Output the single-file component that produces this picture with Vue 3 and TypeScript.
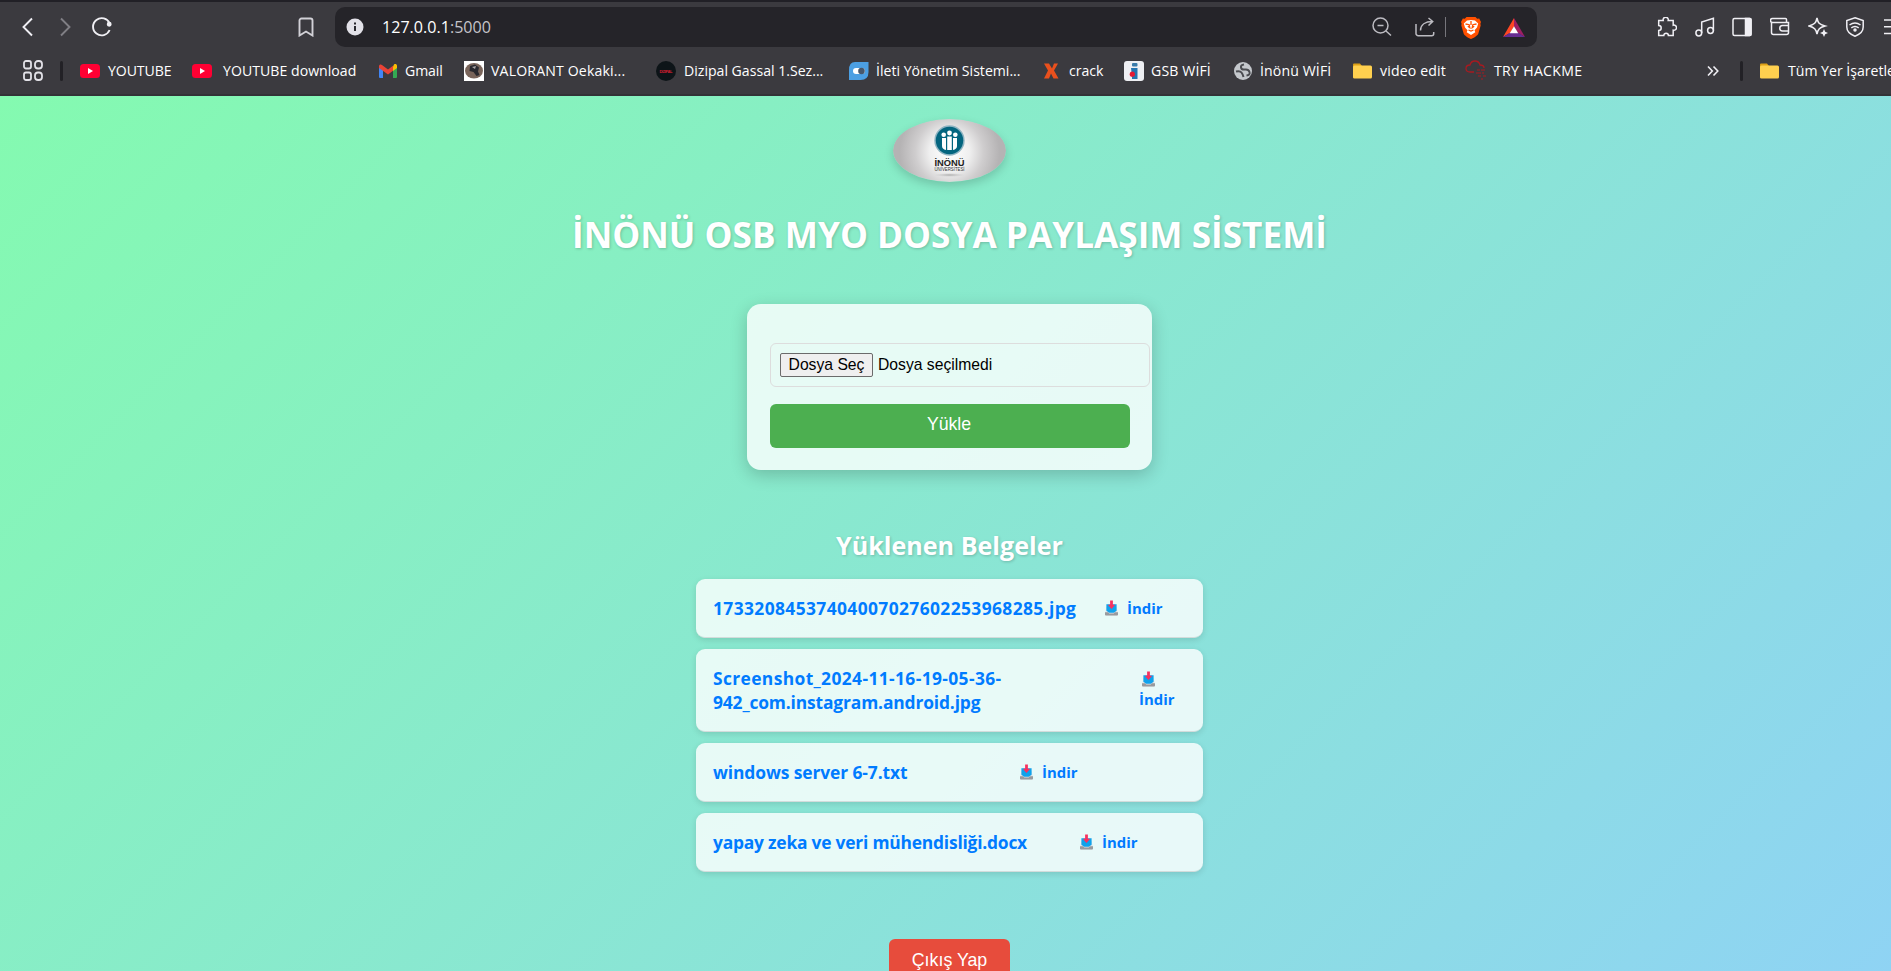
<script setup lang="ts">
interface Bookmark {
  icon: string
  label: string
  slot: number
  tracking: number
}

interface Line {
  text: string
  tracking: number
}

interface Doc {
  lines: Line[]
  nameWidth: number
  stacked?: boolean
}

const bookmarks: Bookmark[] = [
  { icon: 'youtube', label: 'YOUTUBE', slot: 28, tracking: -0.09 },
  { icon: 'youtube', label: 'YOUTUBE download', slot: 31, tracking: 0.03 },
  { icon: 'gmail', label: 'Gmail', slot: 26, tracking: -0.1 },
  { icon: 'valorant', label: 'VALORANT Oekaki...', slot: 27, tracking: 0.16 },
  { icon: 'dizipal', label: 'Dizipal Gassal 1.Sez...', slot: 28, tracking: 0 },
  { icon: 'ileti', label: 'İleti Yönetim Sistemi...', slot: 27, tracking: 0 },
  { icon: 'crack', label: 'crack', slot: 25, tracking: 0 },
  { icon: 'gsb', label: 'GSB WİFİ', slot: 27, tracking: 0.13 },
  { icon: 'globe', label: 'İnönü WİFİ', slot: 26, tracking: 0.12 },
  { icon: 'folder', label: 'video edit', slot: 27, tracking: 0.16 },
  { icon: 'cloud', label: 'TRY HACKME', slot: 29, tracking: 0.3 },
]

const documents: Doc[] = [
  { lines: [{ text: '17332084537404007027602253968285.jpg', tracking: 0.39 }], nameWidth: 392 },
  {
    lines: [
      { text: 'Screenshot_2024-11-16-19-05-36-', tracking: 0.38 },
      { text: '942_com.instagram.android.jpg', tracking: -0.14 },
    ],
    nameWidth: 426,
    stacked: true,
  },
  { lines: [{ text: 'windows server 6-7.txt', tracking: -0.09 }], nameWidth: 307 },
  { lines: [{ text: 'yapay zeka ve veri mühendisliği.docx', tracking: -0.21 }], nameWidth: 367 },
]
</script>

<template>
  <div class="window">
    <header class="chrome">
      <div class="toolbar">
        <svg class="nav" viewBox="0 0 20 20"><path d="M14 1.500 5.500 10l8.500 8.500" /></svg>
        <svg class="nav dim" viewBox="0 0 20 20"><path d="M6 1.500 14.500 10 6 18.500" /></svg>
        <svg class="nav reload" viewBox="0 0 20 20">
          <path d="M17.600 13A8.600 8.600 0 1 1 17.600 6.500" />
          <circle cx="17.200" cy="7.200" r="1.500" class="solid" />
        </svg>
        <svg class="nav mark" viewBox="0 0 20 20"><path d="M3.500 3.500a2 2 0 0 1 2-2h9a2 2 0 0 1 2 2v15L10 14.500l-6.500 4z" /></svg>
        <div class="address">
          <svg class="info" viewBox="0 0 18 18">
            <circle cx="9" cy="9" r="8.500" fill="#e2e1e8" />
            <path d="M9 8v5M9 4.500v2" stroke="#29282e" stroke-width="2" />
          </svg>
          <span class="url">127.0.0.1<span class="port">:5000</span></span>
          <svg class="tool zoom-out" viewBox="0 0 20 20"><circle cx="8.500" cy="8.500" r="7.500" /><path d="m14 14 5 4.500M5.500 8.500h6" /></svg>
          <svg class="tool share" viewBox="0 0 20 20"><path d="M1 7v9.500A2.200 2.200 0 0 0 3.200 18.700h13.500a2 2 0 0 0 2-2V15M5.500 13.500c0-6 5-9 12-9M13.500 1l4.200 3.500-4.200 4" /></svg>
          <i class="bar"></i>
          <svg class="brave" viewBox="0 0 20 23">
            <path d="M5.500 1h9l1.700 1.800 2-.2L20 6l-.6 1.800.3 1.600-2.500 8.500c-.3 1.200-5.700 4.800-7.200 5.100-1.500-.3-6.900-3.900-7.200-5.100L.3 9.400l.3-1.600L0 6l1.800-3.400 2 .2z" fill="#ff5000" />
            <path d="m6 4.500 4-.6 4 .6 3.200 3-1.200 4-2.500 2.700.8 2L10 19l-4.300-2.800.8-2L4 11.500l-1.200-4z" fill="#fff" />
            <path d="m4.500 8 3.700.7.600 3-2-1.500M15.500 8l-3.700.7-.6 3 2-1.500M10 5v4M7.500 14l2.500 1 2.500-1" fill="none" stroke="#ff5000" stroke-width="1.300" />
          </svg>
          <svg class="bat" viewBox="0 0 22 19">
            <path d="M11 0 0 19l7-4 4-6.500z" fill="#ff4724" />
            <path d="m11 0 11 19-7-4-4-6.500z" fill="#9e1f63" />
            <path d="M0 19h22l-6.500-4h-9z" fill="#662d91" />
            <path d="m11 8.300 4.300 7H6.700z" fill="#fff" />
          </svg>
        </div>
        <div class="actions">
          <svg viewBox="0 0 20 20"><path d="M2 3.500h4.500a2.600 2.600 0 1 1 5 0h5v4.700a2.600 2.600 0 1 1 0 5v5.300h-4.800a2.300 2.300 0 0 0-4.600 0H2v-5a2.500 2.500 0 1 0 0-5z" transform="translate(-.3)" /></svg>
          <svg viewBox="0 0 20 20"><circle cx="3.800" cy="16" r="2.900" /><circle cx="15.500" cy="13.500" r="2.900" /><path d="M6.700 16V5l11.700-3.800v12.300" /></svg>
          <svg viewBox="0 0 20 20"><rect x="1" y="1.500" width="18" height="17" rx="1.500" /><path d="M13.500 1.500H18q1 0 1 1v15q0 1-1 1h-4.500z" class="solid" /></svg>
          <svg viewBox="0 0 20 20"><path d="M1.500 4.500v11a2 2 0 0 0 2 2h13a2 2 0 0 0 2-2V5.500H2.500a1.500 1.500 0 0 1 0-4h13q1 0 1 1v3M18.500 8.500h-6a2 2 0 0 0 0 5.500h6z" /></svg>
          <svg viewBox="0 0 20 20"><path d="M9 1c1 5 2 6.500 8 8-5.500 1.500-7 3-8 8-1-5-2.500-6.500-8-8 5.500-1.500 7-3 8-8z" /><path d="m16 12 1.200 2.800L20 16l-2.800 1.200L16 20l-1.200-2.800L12 16l2.800-1.200z" class="solid thin" /></svg>
          <svg viewBox="0 0 20 20"><path d="m10 .8 8.200 2.700V10c0 4.500-3.700 7.500-8.200 9.200C5.500 17.500 1.800 14.500 1.800 10V3.500z" /><path d="M4.500 8q5.500-4 11 0M6.300 10.800q3.700-2.800 7.400 0" /><circle cx="10" cy="13" r="1" class="solid" /></svg>
          <svg viewBox="0 0 20 20"><path d="M1 3h18M1 9.800h18M1 16.500h18" /></svg>
        </div>
      </div>

      <nav class="bookmarks">
        <svg class="apps" viewBox="0 0 20 21">
          <rect x="1" y="1" width="7" height="7.500" rx="2" /><rect x="12" y="1" width="7" height="7.500" rx="3" />
          <rect x="1" y="12.500" width="7" height="7.500" rx="2" /><rect x="12" y="12.500" width="7" height="7.500" rx="3" />
        </svg>
        <i class="divider"></i>
        <a v-for="b in bookmarks" :key="b.label" class="bookmark">
          <span class="slot" :style="{ width: b.slot + 'px' }">
            <svg v-if="b.icon === 'youtube'" width="20" height="20" viewBox="0 0 20 20">
              <rect y="3" width="20" height="14" rx="3.500" fill="#ff0033" /><path d="m8 7 5 3-5 3z" fill="#fff" />
            </svg>
            <svg v-else-if="b.icon === 'gmail'" width="18" height="20" viewBox="0 0 18 20">
              <path d="M0 5v11q0 1 1 1h3V8z" fill="#4285f4" /><path d="M18 5v11q0 1-1 1h-3V8z" fill="#34a853" />
              <path d="M14 5.500V10l4-3V5c0-2-2-2.400-3-1.500z" fill="#fbbc04" /><path d="M0 5v2l9 6.500 5-3.700V4.800L9 8.500 3 4C2 3 0 3.500 0 5z" fill="#ea4335" />
            </svg>
            <svg v-else-if="b.icon === 'valorant'" width="20" height="20" viewBox="0 0 20 20">
              <path d="M0 0h20v20H0z" fill="#fff" /><ellipse cx="10" cy="9.700" rx="9" ry="7.700" fill="#79645a" />
              <path d="m6 5 5-1.500 4 3-1 4 1.500 3.500-3 1-3-4-4-1z" fill="#29282e" /><path d="m8 6 4-1-1 3zM8 11l3 2" fill="#aaa4a5" />
            </svg>
            <svg v-else-if="b.icon === 'dizipal'" width="20" height="20" viewBox="0 0 20 20">
              <circle cx="10" cy="10" r="10" fill="#0d1418" /><text x="10" y="12" text-anchor="middle" class="tiny" textLength="13">DIZIPAL</text>
            </svg>
            <svg v-else-if="b.icon === 'ileti'" width="20" height="20" viewBox="0 0 20 20">
              <path d="M6 1h13.500v10q0 8-8 8H0V9q0-8 6-8z" fill="#4c9fe2" /><rect x="4" y="7" width="12" height="6" rx="3" fill="#fff" /><circle cx="12.500" cy="10" r="3.300" fill="#48586c" />
            </svg>
            <svg v-else-if="b.icon === 'crack'" width="15" height="20" viewBox="0 0 15 20">
              <path d="M0 2.500h5l3 5 2-5h4l-4 7 4.500 8H9.500L7 12.500 5 17.500H0l4-8z" fill="#e9501d" />
            </svg>
            <svg v-else-if="b.icon === 'gsb'" width="20" height="20" viewBox="0 0 20 20">
              <rect width="20" height="20" rx="3" fill="#eeeff3" /><rect x="8" y="2" width="5.500" height="3.500" rx="1" fill="#397aa9" />
              <path d="M7 7h6.500v11H8v-3z" fill="#2474b0" /><circle cx="8.300" cy="13.200" r="2.600" fill="#e61932" />
            </svg>
            <svg v-else-if="b.icon === 'globe'" width="18" height="20" viewBox="0 0 18 20">
              <circle cx="9" cy="10" r="9" fill="#c4c7cc" />
              <path d="M2 10.500q4-1 5.500 1t2 4.500M10 3.500Q6.500 4 7 6.500t4 2 4.500 2.500-3 3.500" fill="none" stroke="#4b4c51" stroke-width="2" />
            </svg>
            <svg v-else-if="b.icon === 'folder'" width="19" height="20" viewBox="0 0 19 20">
              <path d="M0 3.500q0-1 1-1h6L9 5v12H1q-1 0-1-1z" fill="#dda017" /><rect y="4.500" width="19" height="13" rx="1.500" fill="#ffd04f" />
            </svg>
            <svg v-else width="21" height="21" viewBox="0 0 21 21" fill="none" stroke="#a81a20" stroke-width="1.300">
              <path d="M9 12H5Q1 12 1 8.500T5 5q1-4 5-4t5 4q4 0 4 3" /><path d="M12 10h3m1 0h4m-9 3h5m1 0h2m-6 3h3m2 0h3m-5 3h2" stroke-width="1.100" />
            </svg>
          </span>
          <span class="label" :style="{ letterSpacing: b.tracking + 'px' }">{{ b.label }}</span>
        </a>
        <svg class="more" viewBox="0 0 12 12"><path d="m1 1.500 4.300 4.500L1 10.500M6.500 1.500 10.800 6l-4.300 4.500" /></svg>
        <i class="divider"></i>
        <a class="bookmark">
          <span class="slot all">
            <svg width="19" height="20" viewBox="0 0 19 20">
              <path d="M0 3.500q0-1 1-1h6L9 5v12H1q-1 0-1-1z" fill="#dda017" /><rect y="4.500" width="19" height="13" rx="1.500" fill="#ffd04f" />
            </svg>
          </span>
          <span class="label">Tüm Yer İşaretleri</span>
        </a>
      </nav>
    </header>

    <main class="page">
      <svg class="logo" viewBox="0 0 113 63">
        <defs>
          <radialGradient id="silver" gradientUnits="userSpaceOnUse" cx="56.500" cy="33" r="50">
            <stop offset="0" stop-color="#fff" /><stop offset=".4" stop-color="#efefef" />
            <stop offset=".68" stop-color="#cfcdce" /><stop offset="1" stop-color="#b5b3b4" />
          </radialGradient>
          <radialGradient id="ground"><stop offset="0" stop-color="#aaa" /><stop offset="1" stop-color="#ccc" stop-opacity="0" /></radialGradient>
        </defs>
        <ellipse cx="56.500" cy="31.500" rx="56.500" ry="31.500" fill="url(#silver)" />
        <circle cx="56.500" cy="21.500" r="15.200" fill="#8eb4c2" />
        <circle cx="56.500" cy="21.500" r="13.700" fill="#03657f" />
        <g fill="#fff">
          <circle cx="50.700" cy="15.700" r="2.300" /><circle cx="56.500" cy="14" r="2.400" /><circle cx="62.300" cy="15.700" r="2.300" />
          <path d="M49 19h4v12q-4-1-4-4zM54.200 17.500h4.600V31h-4.600zM60 19h4v8q0 3-4 4z" />
        </g>
        <text x="41.500" y="46.500" textLength="30" lengthAdjust="spacingAndGlyphs" class="name">İNÖNÜ</text>
        <text x="41.500" y="52.300" textLength="30" lengthAdjust="spacingAndGlyphs" class="sub">ÜNİVERSİTESİ</text>
        <ellipse cx="56.500" cy="56" rx="16" ry="2" fill="url(#ground)" />
      </svg>

      <h1>İNÖNÜ OSB MYO DOSYA PAYLAŞIM SİSTEMİ</h1>

      <form class="card" @submit.prevent>
        <div class="file">
          <button type="button" class="pick">Dosya Seç</button>
          <span>Dosya seçilmedi</span>
        </div>
        <button class="upload">Yükle</button>
      </form>

      <h2>Yüklenen Belgeler</h2>
      <ul class="docs">
        <li v-for="d in documents" :key="d.lines[0].text">
          <a class="name-link" :style="{ width: d.nameWidth + 'px' }">
            <span v-for="l in d.lines" :key="l.text" :style="{ letterSpacing: l.tracking + 'px' }">{{ l.text }}</span>
          </a>
          <a class="download" :class="{ stacked: d.stacked }">
            <svg viewBox="0 0 14 16">
              <path d="M1.500 7h11l1.500 8q0 1-1 1H1q-1 0-1-1z" fill="#dfe3e5" /><path d="M0 12.500h3.500l1 1.500h5l1-1.500H14V15q0 1-1 1H1q-1 0-1-1z" fill="#989a9e" />
              <path d="M1.500 4h11v7L9.500 13h-5l-3-2z" fill="#10a2ec" /><path d="M5.500 0h3v4.500H11L7 9 3 4.500h2.500z" fill="#f8315f" />
            </svg>
            <span>İndir</span>
          </a>
        </li>
      </ul>

      <button class="logout">Çıkış Yap</button>
    </main>
  </div>
</template>

<style>
body {
  margin: 0;
  overflow: hidden;
}
</style>

<style scoped>
.window {
  width: 1891px;
  height: 971px;
  overflow: hidden;
  display: flex;
  flex-direction: column;
  font-family: "Open Sans", "Noto Sans", sans-serif;
}
svg {
  display: block;
  flex: none;
}
.chrome {
  flex: none;
  box-sizing: border-box;
  height: 96px;
  background: #3b3a3f;
  border-top: 2px solid #212026;
  border-bottom: 2px solid #333237;
  color: #fff;
}
.toolbar {
  display: flex;
  align-items: center;
  height: 40px;
  padding: 5px 0 0 18px;
}
.nav {
  width: 20px;
  height: 20px;
  fill: none;
  stroke: #f0eff4;
  stroke-width: 1.9;
  margin-right: 17px;
}
.dim {
  stroke: #807f85;
}
.nav.mark {
  margin: 0 19px 0 167px;
  stroke: #d2d1d7;
}
.solid {
  fill: #f0eff4;
}
.address {
  flex: none;
  box-sizing: border-box;
  display: flex;
  align-items: center;
  width: 1202px;
  height: 40px;
  padding-left: 11px;
  border-radius: 10px;
  background: #252429;
}
.info {
  width: 18px;
  height: 18px;
}
.url {
  margin-left: 18px;
  width: 990px;
  font-size: 16.1px;
  line-height: 24px;
}
.port {
  color: #c5c4ca;
}
.tool {
  width: 20px;
  height: 20px;
  fill: none;
  stroke: #bcbbc1;
  stroke-width: 1.5;
}
.share {
  margin-left: 23px;
}
.bar {
  width: 1px;
  height: 20px;
  margin-left: 10px;
  background: #77767c;
}
.brave {
  width: 20px;
  height: 23px;
  margin-left: 15px;
}
.bat {
  width: 22px;
  height: 19px;
  margin-left: 22px;
}
.actions {
  flex: none;
  display: flex;
  gap: 17.700px;
  margin-left: 120px;
}
.actions svg {
  width: 20px;
  height: 20px;
  fill: none;
  stroke: #f0eff4;
  stroke-width: 1.5;
}
.actions svg .solid {
  fill: #f0eff4;
}
.thin {
  stroke: none;
}
.bookmarks {
  display: grid;
  grid-template-columns: 37px 20px 112px 187px 85px 192px 193px 195px 80px 110px 119px 112px 242px 33px 20px 140px;
  align-items: center;
  height: 47px;
  padding-left: 23px;
}
.apps {
  width: 20px;
  height: 21px;
  fill: none;
  stroke: #e2e1e7;
  stroke-width: 1.8;
}
.divider {
  width: 3px;
  height: 20px;
  border-radius: 2px;
  background: #222126;
}
.bookmark {
  display: flex;
  align-items: center;
  white-space: nowrap;
}
.slot {
  flex: none;
}
.slot.all {
  width: 28px;
}
.label {
  font-size: 14.1px;
  line-height: 20px;
}
.tiny {
  font: bold 4px "Liberation Sans", sans-serif;
  fill: #d51f32;
}
.more {
  width: 12px;
  height: 12px;
  fill: none;
  stroke: #f0eff4;
  stroke-width: 1.6;
}
.page {
  flex: none;
  box-sizing: border-box;
  display: flex;
  flex-direction: column;
  align-items: center;
  height: 889px;
  padding: 23px 0 0 8px;
  background: linear-gradient(135deg, #84fab0, #8fd3f4);
}
.logo {
  width: 113px;
  height: 63px;
  border-radius: 50%;
  box-shadow: 0 4px 10px rgba(0, 0, 0, 0.17);
}
.name {
  font: bold 8.500px "Liberation Sans", sans-serif;
  fill: #222;
}
.sub {
  font: 5.500px "Liberation Sans", sans-serif;
  fill: #333;
}
h1,
h2 {
  margin: 0;
  color: #fff;
  font-weight: 700;
  white-space: nowrap;
  text-shadow: 1px 1px 3px rgba(0, 0, 0, 0.2);
}
h1 {
  margin-top: 27px;
  font-size: 35.2px;
  line-height: 50px;
}
.card {
  box-sizing: border-box;
  width: 405px;
  height: 166px;
  margin-top: 45px;
  padding: 39px 22px 0 23px;
  border-radius: 14px;
  background: rgba(255, 255, 255, 0.8);
  box-shadow: 0 5px 17px rgba(0, 0, 0, 0.2);
}
.file {
  box-sizing: border-box;
  display: flex;
  align-items: center;
  gap: 5px;
  width: 380px;
  height: 44px;
  padding: 0 0 1px 9px;
  border: 1px solid #ddd;
  border-radius: 6px;
  font: 15.7px "Liberation Sans", Arial, sans-serif;
  color: #000;
}
.pick {
  box-sizing: border-box;
  width: 93px;
  height: 24px;
  padding: 0;
  border: 1px solid #6b6b6b;
  border-radius: 2px;
  background: #efefef;
  color: #000;
  font: inherit;
}
.upload {
  display: block;
  width: 360px;
  height: 44px;
  margin-top: 17px;
  padding: 0 2px 3px 0;
  border: 0;
  border-radius: 6px;
  background: #4caf50;
  color: #fff;
  font: 17.7px "Liberation Sans", Arial, sans-serif;
}
h2 {
  margin-top: 57px;
  font-size: 25.1px;
  line-height: 36px;
}
.docs {
  margin: 16px 0 0;
  padding: 0;
  list-style: none;
  width: 507px;
  display: flex;
  flex-direction: column;
  gap: 11.500px;
}
.docs li {
  box-sizing: border-box;
  display: flex;
  align-items: center;
  padding: 17px 17.500px 16.500px 17px;
  border-bottom: 1px solid #d3dcdb;
  border-radius: 9px;
  background: rgba(255, 255, 255, 0.8);
  box-shadow: 0 2px 6px rgba(0, 0, 0, 0.12);
  color: #007bff;
  font-weight: 700;
}
.name-link {
  flex: none;
  font-size: 17.4px;
  line-height: 24px;
  white-space: nowrap;
}
.name-link span {
  display: block;
}
.download {
  display: flex;
  align-items: center;
  gap: 9px;
  font-size: 14.900px;
  line-height: 22px;
}
.download svg {
  width: 13px;
  height: 16px;
}
.stacked {
  flex-direction: column;
  align-items: flex-start;
  gap: 1px;
}
.stacked svg {
  margin-left: 3px;
}
.logout {
  flex: none;
  width: 121px;
  height: 44px;
  margin-top: 67px;
  padding: 0;
  border: 0;
  border-radius: 6px;
  background: #e74c3c;
  color: #fff;
  font: 17.800px "Liberation Sans", Arial, sans-serif;
}
</style>
